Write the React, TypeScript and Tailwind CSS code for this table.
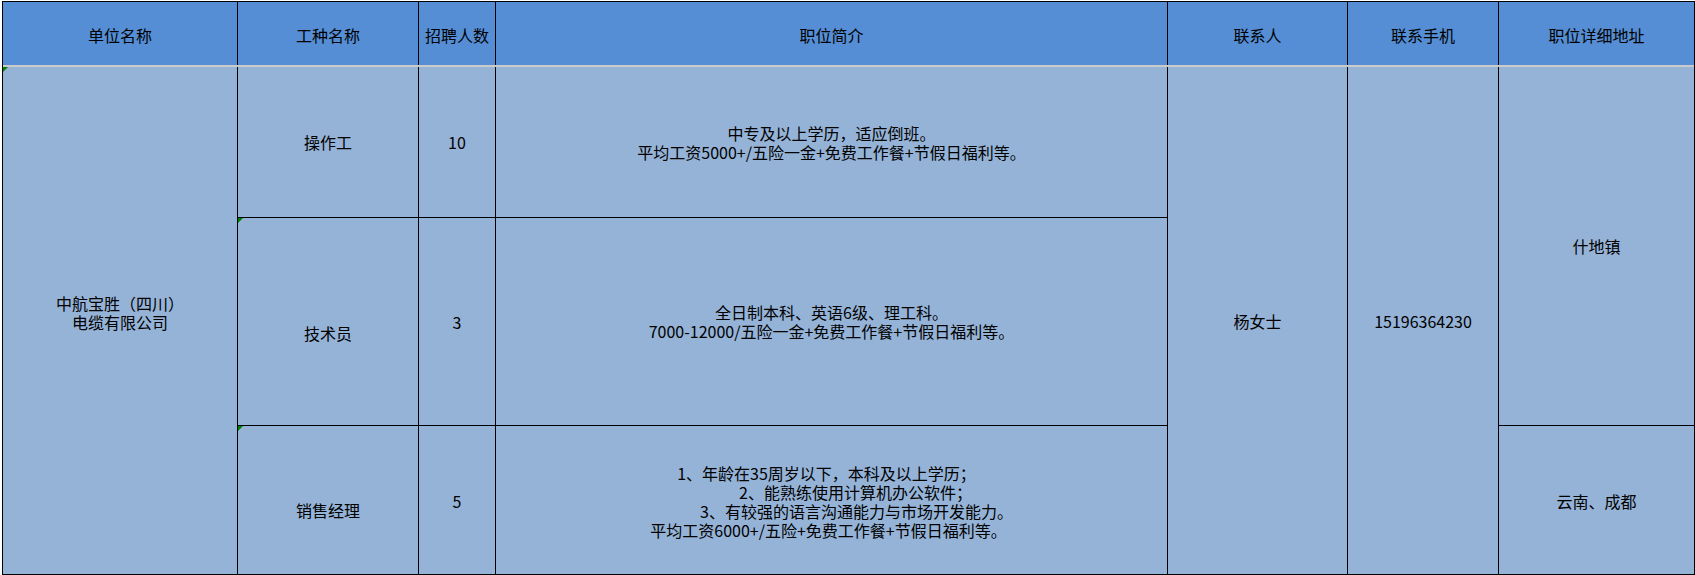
import React from 'react';

const headers = ['单位名称', '工种名称', '招聘人数', '职位简介', '联系人', '联系手机', '职位详细地址'];

// little green error flag Excel paints in a cell corner
function Flag() {
  return (
    <span className="absolute top-0 left-0 w-0 h-0 border-t-[5px] border-t-[#008000] border-r-[5px] border-r-transparent" />
  );
}

export default function App() {
  const cell = 'relative bg-[#95b3d7] flex flex-col items-center justify-center text-center leading-[19px]';

  return (
    <div className="w-[1695px] h-[575px] bg-white pt-px pl-[2px] overflow-hidden font-['Noto_Sans_CJK_SC',sans-serif] text-[16px] text-black">
      <div className="w-[1693px] border border-black bg-black">
        {/* header row */}
        <div className="grid grid-cols-[234px_180px_76px_671px_179px_150px_195px] gap-x-px h-[63px]">
          {headers.map((h) => (
            <div key={h} className="bg-[#558ed5] flex items-center justify-center pt-[3px] whitespace-nowrap">
              {h}
            </div>
          ))}
        </div>

        {/* frozen pane line */}
        <div className="h-[2px] bg-[#cacaca]" />

        {/* body */}
        <div className="grid grid-cols-[234px_180px_76px_671px_179px_150px_195px] grid-rows-[150px_207px_148px] gap-px">
          <div className={`${cell} row-span-3 col-start-1 row-start-1 pb-[16px]`}>
            <Flag />
            <span>中航宝胜（四川）</span>
            <span>电缆有限公司</span>
          </div>

          {/* row 1 */}
          <div className={`${cell} col-start-2 row-start-1`}>操作工</div>
          <div className={`${cell} col-start-3 row-start-1`}>10</div>
          <div className={`${cell} col-start-4 row-start-1 pt-px`}>
            <span>中专及以上学历，适应倒班。</span>
            <span>平均工资5000+/五险一金+免费工作餐+节假日福利等。</span>
          </div>

          {/* merged contact columns */}
          <div className={`${cell} col-start-5 row-start-1 row-span-3 pt-[2px]`}>杨女士</div>
          <div className={`${cell} col-start-6 row-start-1 row-span-3 pt-[2px]`}>15196364230</div>
          <div className={`${cell} col-start-7 row-start-1 row-span-2`}>什地镇</div>

          {/* row 2 */}
          <div className={`${cell} col-start-2 row-start-2 pt-[24px]`}>
            <Flag />
            技术员
          </div>
          <div className={`${cell} col-start-3 row-start-2 pt-[2px]`}>3</div>
          <div className={`${cell} col-start-4 row-start-2 pt-px`}>
            <span>全日制本科、英语6级、理工科。</span>
            <span>7000-12000/五险一金+免费工作餐+节假日福利等。</span>
          </div>

          {/* row 3 */}
          <div className={`${cell} col-start-2 row-start-3 pt-[20px]`}>
            <Flag />
            销售经理
          </div>
          <div className={`${cell} col-start-3 row-start-3 pt-[2px]`}>5</div>
          <div className={`${cell} col-start-4 row-start-3 pt-[4px]`}>
            <span className="pr-[10px]">1、年龄在35周岁以下，本科及以上学历；</span>
            <span className="pl-[48px]">2、能熟练使用计算机办公软件；</span>
            <span className="pl-[50px]">3、有较强的语言沟通能力与市场开发能力。</span>
            <span className="pr-[6px]">平均工资6000+/五险+免费工作餐+节假日福利等。</span>
          </div>
          <div className={`${cell} col-start-7 row-start-3 pt-[2px]`}>云南、成都</div>
        </div>
      </div>
    </div>
  );
}
